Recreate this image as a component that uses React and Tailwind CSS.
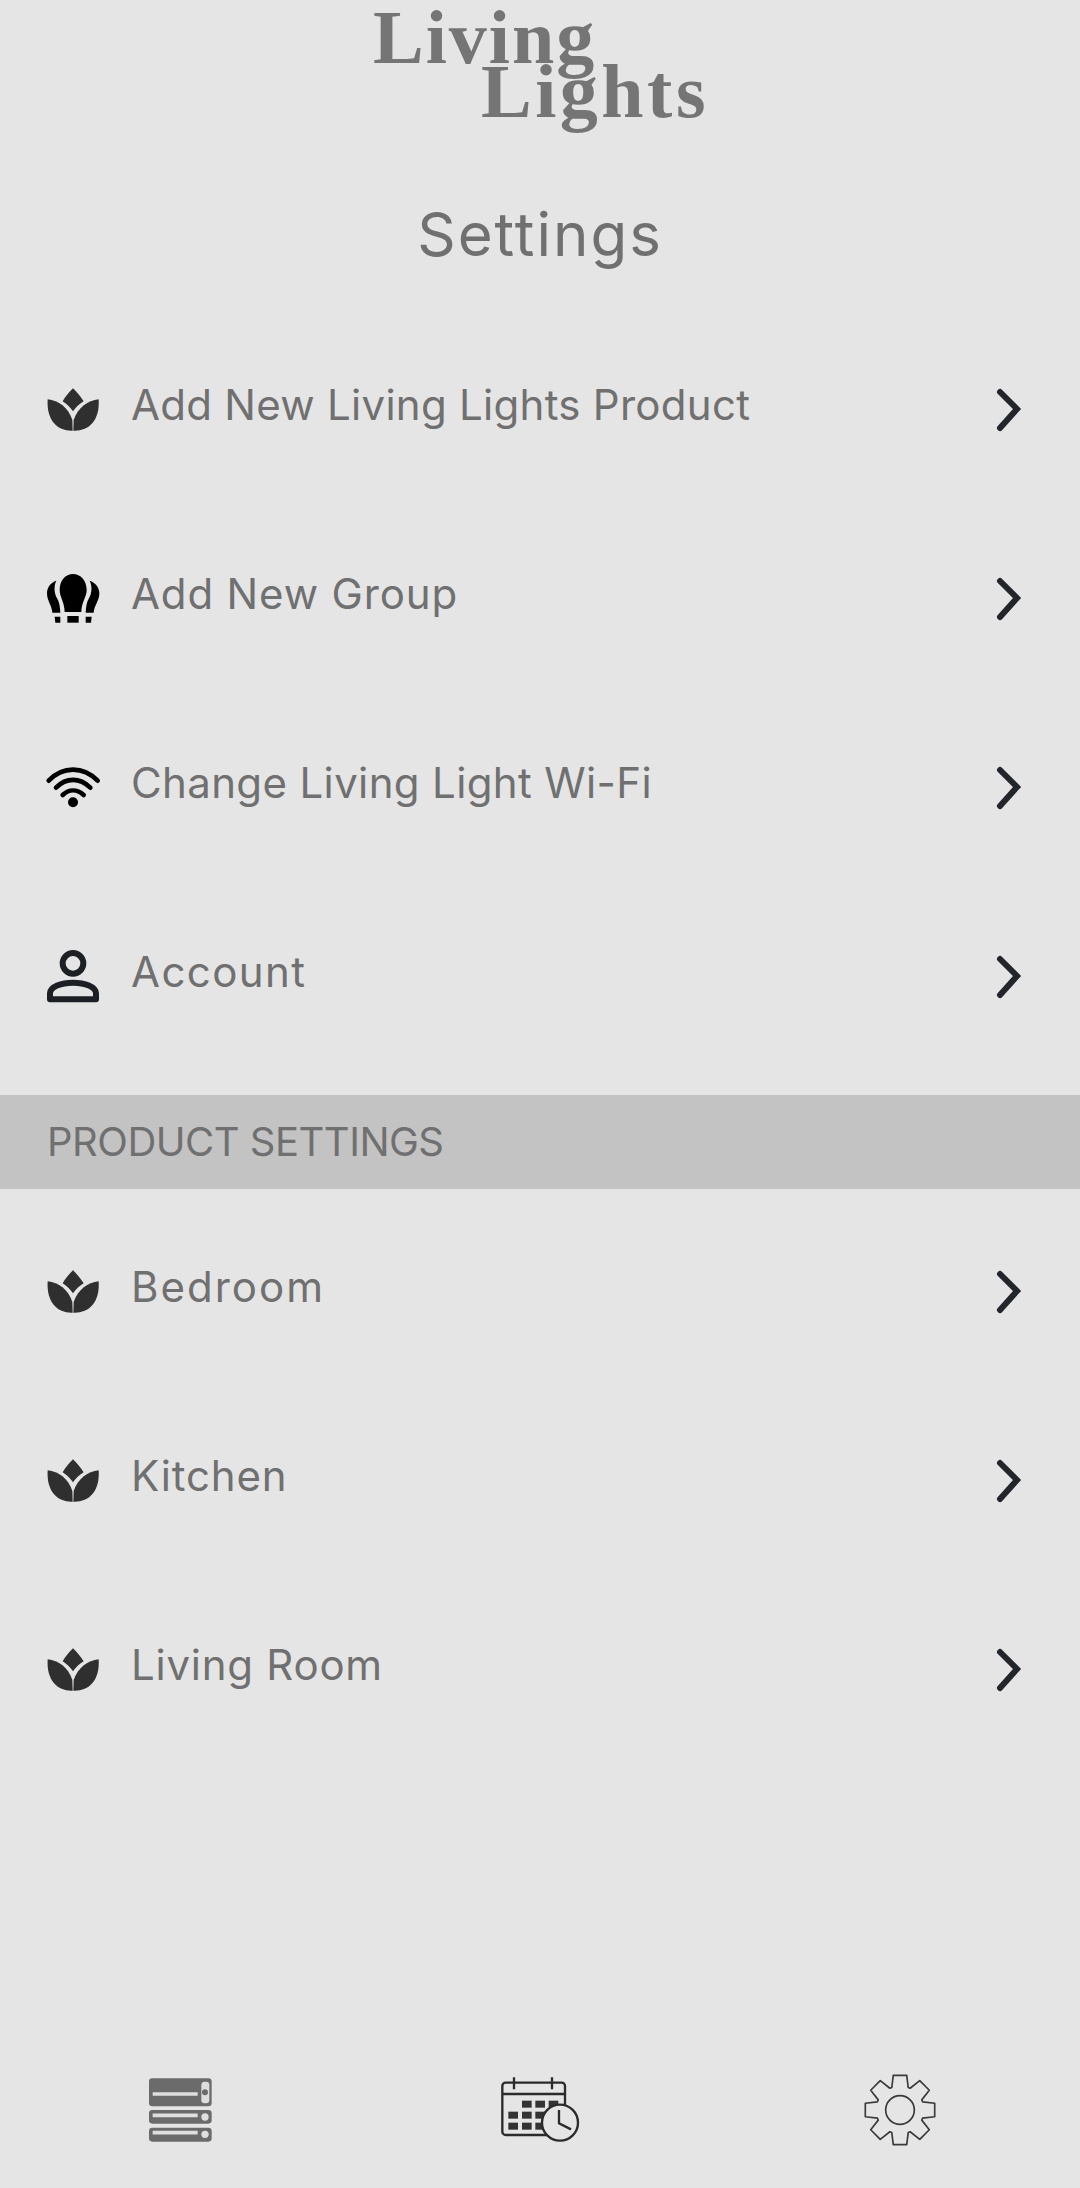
import React from "react";

const Lotus = () => (
  <svg viewBox="40 27 180 180" className="w-[60px] h-[60px] shrink-0" fill="#2f2f2f">
    <path d="M130 55 C142 66 153 80 162 94 C150 101 139 111 130 124 C121 111 110 101 99 94 C107 80 118 66 130 55Z" />
    <path d="M54 88 C86 92 116 112 128 150 L129 182 C86 184 50 155 54 88Z" />
    <path d="M207 88 C175 92 145 112 132 150 L131 182 C175 184 211 155 207 88Z" />
  </svg>
);

const Bulbs = () => (
  <svg viewBox="40 24 180 180" className="w-[60px] h-[60px] shrink-0" fill="#000">
    <path d="M130 42 C153 42 171 62 171 90 C171 112 156 124 155 156 L105 156 C104 124 90 112 90 90 C90 62 107 42 130 42Z" />
    <path d="M113 168 H147 V188 H113Z" />
    <path d="M80 62 C72 78 73 100 83 116 C89 126 91 140 92 158 L68 158 C67 138 52 122 52 100 C52 82 63 68 80 62Z" />
    <path d="M180 62 C188 78 187 100 177 116 C171 126 169 140 168 158 L192 158 C193 138 209 122 209 100 C209 82 197 68 180 62Z" />
    <path d="M75 170 H92 V188 H77Z" />
    <path d="M168 170 H186 L184 188 H168Z" />
  </svg>
);

const Wifi = () => (
  <svg viewBox="40 21 180 180" className="w-[60px] h-[60px] shrink-0" fill="none" stroke="#000" strokeWidth="14" strokeLinecap="round">
    <path d="M57 92 C100 48 160 48 204 92" />
    <path d="M79 113 C110 82 150 82 182 113" />
    <path d="M99 135 C118 117 142 117 162 135" />
    <circle cx="130" cy="157" r="15" fill="#000" stroke="none" />
  </svg>
);

const Person = () => (
  <svg viewBox="40 48 180 180" className="w-[60px] h-[60px] shrink-0" fill="none" stroke="#1c2024" strokeWidth="18">
    <circle cx="130" cy="100" r="31" />
    <path d="M61 208 V190 C61 170 95 158 130 158 C165 158 199 170 199 190 V208 Z" strokeLinejoin="round" />
  </svg>
);

const Chevron = () => (
  <svg viewBox="0 0 30 48" className="w-[30px] h-[48px] shrink-0" fill="none" stroke="#22252a" strokeWidth="6" strokeLinecap="round" strokeLinejoin="miter">
    <path d="M7 7 L24 24 L7 43" />
  </svg>
);

const ServerIcon = () => (
  <svg viewBox="0 0 300 300" className="w-[100px] h-[100px]">
    <rect x="57" y="55" width="188" height="84" rx="10" fill="#6b6b6b" />
    <rect x="57" y="150" width="188" height="41" rx="10" fill="#6b6b6b" />
    <rect x="57" y="203" width="188" height="42" rx="10" fill="#6b6b6b" />
    <g stroke="#dedede" strokeWidth="11">
      <path d="M68 102 H203" />
      <path d="M68 166 H203" />
      <path d="M68 218 H203" />
    </g>
    <rect x="214" y="65" width="24" height="65" rx="10" fill="#dedede" />
    <circle cx="225" cy="97" r="9" fill="#6b6b6b" />
    <circle cx="225" cy="171" r="11" fill="#dedede" />
    <circle cx="225" cy="223" r="11" fill="#dedede" />
  </svg>
);

const CalendarIcon = () => {
  const cells = [
    [96, 122], [136, 122], [176, 122],
    [55, 155], [96, 155], [136, 155],
    [55, 188], [96, 188], [136, 188],
  ];
  return (
    <svg viewBox="0 0 300 300" className="w-[100px] h-[100px]">
      <rect x="37" y="68" width="188" height="157" rx="10" fill="none" stroke="#2b2b2b" strokeWidth="7" />
      <path d="M37 102 H225 M72 52 V88 M186 52 V88" stroke="#2b2b2b" strokeWidth="7" fill="none" />
      {cells.map(([x, y]) => (
        <rect key={`${x}-${y}`} x={x} y={y} width="29" height="21" fill="#333" />
      ))}
      <circle cx="210" cy="188" r="54" fill="#e5e5e5" stroke="#2b2b2b" strokeWidth="7" />
      <path d="M207 150 V190 L243 208" fill="none" stroke="#2b2b2b" strokeWidth="7" />
    </svg>
  );
};

const gearPath = () => {
  const pt = (r, deg) => {
    const a = ((deg - 90) * Math.PI) / 180;
    return `${(150 + r * Math.cos(a)).toFixed(1)} ${(150 + r * Math.sin(a)).toFixed(1)}`;
  };
  let d = "";
  for (let i = 0; i < 8; i++) {
    const c = i * 45;
    d += `${i === 0 ? "M" : "L"}${pt(72, c - 20)} L${pt(106, c - 11)} L${pt(106, c + 11)} L${pt(72, c + 20)} `;
  }
  return d + "Z";
};

const GearIcon = () => (
  <svg viewBox="0 0 300 300" className="w-[100px] h-[100px]" fill="none" stroke="#3a3a3a" strokeWidth="5" strokeLinejoin="round">
    <path d={gearPath()} />
    <circle cx="150" cy="150" r="43" />
  </svg>
);

const Row = ({ icon, label, tracking }) => (
  <div className="h-[189px] flex items-center pl-[43px] pr-[57px]">
    {icon}
    <span className={`ml-[28px] mb-[8px] flex-1 text-[42px] leading-[52px] text-[#707070] ${tracking}`}>{label}</span>
    <Chevron />
  </div>
);

export default function App() {
  return (
    <div className="w-[1080px] h-[2188px] bg-[#e5e5e5] flex flex-col overflow-hidden font-['Inter','Noto_Sans',sans-serif]">
      <div className="h-[134px] pl-[373px] font-['Liberation_Serif',serif] font-bold text-[76px] leading-[54px] text-[#757575]">
        <div className="pt-[10px] tracking-[2px] h-[64px]">Living</div>
        <div className="pl-[108px] tracking-[3.5px]">Lights</div>
      </div>
      <div className="h-[180px] pt-[66px] text-center text-[60px] leading-[68px] tracking-[2px] text-[#707070]">Settings</div>
      <Row icon={<Lotus />} label="Add New Living Lights Product" tracking="tracking-[0.28px]" />
      <Row icon={<Bulbs />} label="Add New Group" tracking="tracking-[0.85px]" />
      <Row icon={<Wifi />} label="Change Living Light Wi-Fi" tracking="tracking-[0.36px]" />
      <Row icon={<Person />} label="Account" tracking="tracking-[1.4px]" />
      <div className="mt-[25px] h-[94px] bg-[#c3c3c3] flex items-center pl-[47px] text-[40px] tracking-[-0.5px] text-[#707070]">PRODUCT SETTINGS</div>
      <div className="mt-[7px]">
        <Row icon={<Lotus />} label="Bedroom" tracking="tracking-[2px]" />
        <Row icon={<Lotus />} label="Kitchen" tracking="tracking-[0.85px]" />
        <Row icon={<Lotus />} label="Living Room" tracking="tracking-[0.75px]" />
      </div>
      <div className="mt-auto mb-[28px] grid grid-cols-3 justify-items-center">
        <ServerIcon />
        <CalendarIcon />
        <GearIcon />
      </div>
    </div>
  );
}
